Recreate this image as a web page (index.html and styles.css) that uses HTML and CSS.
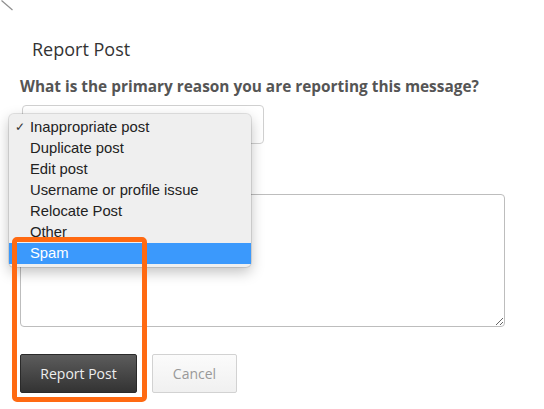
FILE: index.html
```html
<!DOCTYPE html>
<html>
<head>
<meta charset="utf-8">
<link rel="stylesheet" href="styles.css">
</head>
<body>
<svg class="corner" width="16" height="12" viewBox="0 0 16 12"><path d="M1.5 0.5 L12.5 10" stroke="#8f8f8f" stroke-width="1.2" fill="none"/></svg>
<div class="dialog">
  <h2 class="title">Report Post</h2>
  <p class="question">What is the primary reason you are reporting this message?</p>
  <div class="select-wrap">
    <div class="select"></div>
    <ul class="popup">
      <li class="opt checked"><span class="check">✓</span>Inappropriate post</li>
      <li class="opt">Duplicate post</li>
      <li class="opt">Edit post</li>
      <li class="opt">Username or profile issue</li>
      <li class="opt">Relocate Post</li>
      <li class="opt">Other</li>
      <li class="opt active">Spam</li>
    </ul>
  </div>
  <textarea class="details"></textarea>
  <div class="actions">
    <button class="btn primary">Report Post</button>
    <button class="btn cancel">Cancel</button>
  </div>
</div>
<div class="highlight"></div>
</body>
</html>
```
FILE: styles.css
```css
html, body {
  margin: 0;
  padding: 0;
  background: #fff;
}
body {
  width: 544px;
  height: 409px;
  overflow: hidden;
  position: relative;
  font-family: "Open Sans", "Liberation Sans", sans-serif;
}
.corner {
  position: absolute;
  left: 0;
  top: 0;
}
.dialog {
  padding: 37px 0 0 20px;
  display: flex;
  flex-direction: column;
  align-items: flex-start;
}
.title {
  margin: 0 0 0 12px;
  font-size: 18px;
  line-height: 24px;
  font-weight: 400;
  color: #333;
}
.question {
  margin: 16px 0 0 0;
  font-size: 15.4px;
  line-height: 20px;
  font-weight: 700;
  color: #555;
}
.select-wrap {
  position: relative;
  margin: 8px 0 0 2px;
}
.select {
  width: 240px;
  height: 37px;
  border: 1px solid #d0d0d0;
  border-radius: 4px;
  background: #fff;
}
.popup {
  position: absolute;
  left: -13px;
  top: 9px;
  width: 242px;
  margin: 0;
  padding: 3px 0;
  list-style: none;
  background: #efefef;
  border-radius: 5px;
  box-shadow: 0 0 0 1px rgba(0,0,0,0.1), 0 5px 14px rgba(0,0,0,0.25);
  font-family: "Liberation Sans", Arial, sans-serif;
  font-size: 14.8px;
  color: #222;
  z-index: 2;
}
.opt {
  position: relative;
  height: 21px;
  line-height: 21px;
  padding-left: 21px;
}
.check {
  position: absolute;
  left: 6px;
  top: 0;
  font-size: 12px;
  color: #333;
}
.opt.active {
  background: #3b99fc;
  color: #fff;
}
.details {
  display: block;
  box-sizing: border-box;
  width: 485px;
  height: 133px;
  margin: 50px 0 0 0;
  border: 1px solid #bdbdbd;
  border-radius: 4px;
  background: #fff;
  resize: both;
}
.actions {
  display: flex;
  gap: 15px;
  margin-top: 27px;
}
.btn {
  box-sizing: border-box;
  height: 39px;
  font-family: "Open Sans", "Liberation Sans", sans-serif;
  font-size: 14px;
  border-radius: 2px;
  padding: 0;
}
.primary {
  width: 117px;
  background: linear-gradient(#5c5c5c, #333);
  border: 1px solid #2a2a2a;
  color: #eee;
}
.cancel {
  width: 85px;
  background: linear-gradient(#fbfbfb, #f0f0f0);
  border: 1px solid #d2d2d2;
  color: #999;
}
.highlight {
  position: absolute;
  left: 12px;
  top: 237px;
  width: 125px;
  height: 155px;
  border: 5px solid #ff6a12;
  border-radius: 5px;
  z-index: 3;
}
```
